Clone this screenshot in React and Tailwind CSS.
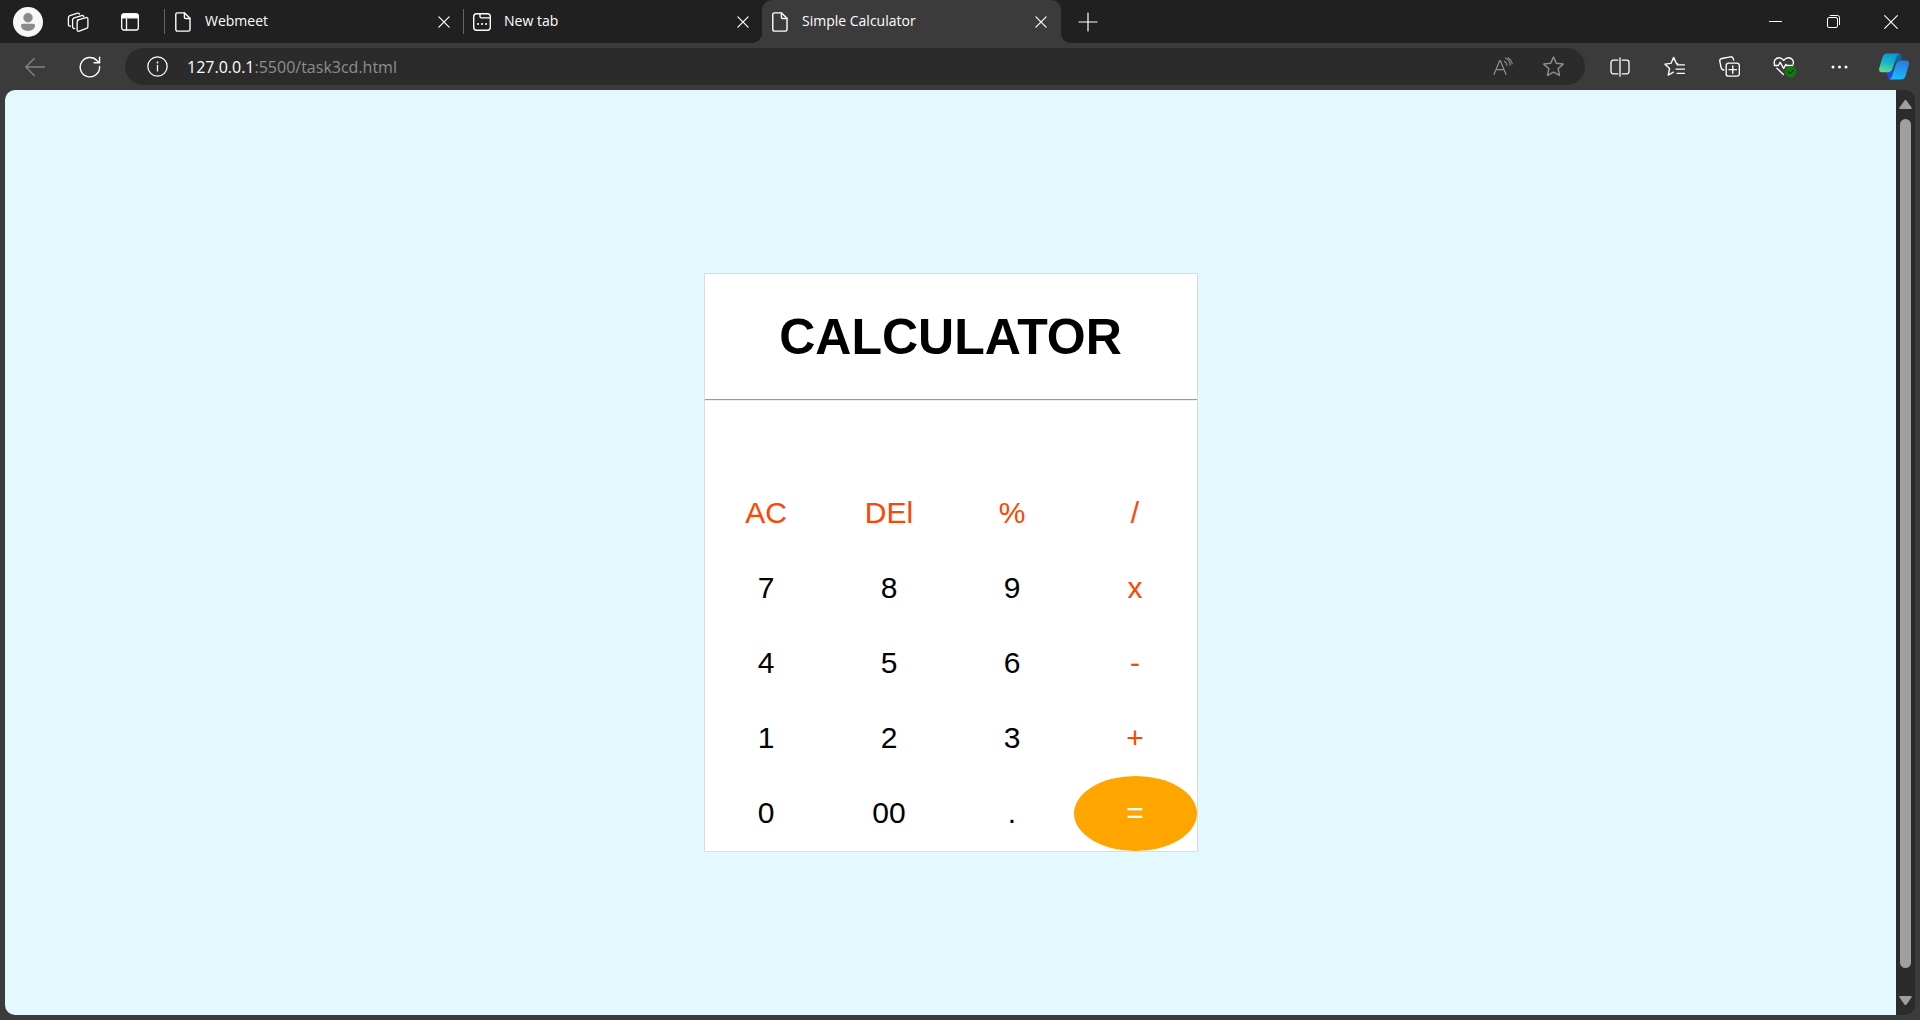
import React from "react";

function Icon({ size = 20, className = "", sw = 1.2, children }) {
  return (
    <svg
      width={size}
      height={size}
      viewBox="0 0 20 20"
      fill="none"
      stroke="currentColor"
      strokeWidth={sw}
      strokeLinecap="round"
      strokeLinejoin="round"
      className={`shrink-0 ${className}`}
      aria-hidden="true"
    >
      {children}
    </svg>
  );
}

const PageIcon = () => (
  <Icon sw={1.4}>
    <path d="M4.3 0.9H11.6L17 6.3V17.6a1.5 1.5 0 0 1-1.5 1.5H4.3a1.5 1.5 0 0 1-1.5-1.5V2.4A1.5 1.5 0 0 1 4.3 .9Z" />
    <path d="M11.4 1V5.2a1.3 1.3 0 0 0 1.3 1.3H17" />
  </Icon>
);

const NewTabIcon = () => (
  <Icon sw={1.4}>
    <rect x="1.7" y="1.7" width="16.6" height="16.6" rx="3" />
    <path d="M8 2v2.6a1.3 1.3 0 0 0 1.3 1.3H18" />
    <path d="M6 12h.1M10 12h.1M14 12h.1" strokeWidth="2" />
  </Icon>
);

const CloseIcon = () => (
  <Icon size={12} sw={2}>
    <path d="M1.5 1.5l17 17M18.5 1.5l-17 17" />
  </Icon>
);

const WorkspacesIcon = () => (
  <Icon size={22} sw={1.2}>
    <path d="M9.4 8.4l7.7-2.4a1.4 1.4 0 0 1 1.9 1.4v6.6a2 2 0 0 1-1.3 1.9l-6.6 2.5a1.4 1.4 0 0 1-1.9-1.4v-6.8a2 2 0 0 1 1.3-1.9Z" />
    <path d="M7 15.9a1.4 1.4 0 0 1-1.9-1.3V8.2a2 2 0 0 1 1.4-1.9l6.9-2.2a1.4 1.4 0 0 1 1.8 1" />
    <path d="M3.2 13.7a1.4 1.4 0 0 1-1.9-1.3V6.1a2 2 0 0 1 1.4-1.9l6.9-2.2a1.4 1.4 0 0 1 1.8.9" />
  </Icon>
);

const TabActionsIcon = () => (
  <Icon sw={1.3}>
    <rect x="1.7" y="2" width="16.6" height="16" rx="2.2" />
    <path d="M1.7 4.2A2.2 2.2 0 0 1 3.9 2h12.2a2.2 2.2 0 0 1 2.2 2.2V5.8H1.7Z" fill="currentColor" />
    <path d="M6.5 7v11" />
  </Icon>
);

const Copilot = () => (
  <svg width="30" height="27" viewBox="0 0 90 80" className="shrink-0" aria-hidden="true">
    <defs>
      <linearGradient id="cpLeft" x1="0.6" y1="0" x2="0.3" y2="1">
        <stop offset="0" stopColor="#0b96d6" />
        <stop offset="0.5" stopColor="#18b3c8" />
        <stop offset="1" stopColor="#5fe08c" />
      </linearGradient>
      <linearGradient id="cpRight" x1="0.6" y1="0" x2="0.4" y2="1">
        <stop offset="0" stopColor="#2f78e2" />
        <stop offset="1" stopColor="#17bdf7" />
      </linearGradient>
      <linearGradient id="cpTop" x1="0" y1="0" x2="1" y2="1">
        <stop offset="0" stopColor="#0a86c0" />
        <stop offset="1" stopColor="#0a4f78" />
      </linearGradient>
    </defs>
    <path fill="url(#cpTop)" d="M42 1H58C68 1 67 15 73 22H64C56 22 53 24 50 30L44 22Z" />
    <path fill="#2148dc" d="M20 57H26C33 57 36 55 39 49L46 58C42 70 41 79 35 79C26 79 26 64 20 57Z" />
    <path fill="url(#cpLeft)" d="M24 1H62C54 3 51 12 48 23L41 46C38 54 33 57 26 57H8C1 57-1 51 1 44L10 14C13 4 17 1 24 1Z" />
    <path fill="url(#cpRight)" d="M66 79H30C37 77 40 68 43 57L50 34C53 26 58 22 65 22H82C89 22 91 28 89 36L80 67C77 76 73 79 66 79Z" />
  </svg>
);

function Tab({ icon, title, active }) {
  return (
    <div
      className={
        active
          ? "relative flex w-[299px] items-center rounded-t-[10px] bg-[#3b3b3b] pl-2 pr-3.5"
          : "flex w-[299px] items-center pl-2 pr-3.5"
      }
    >
      {active && (
        <>
          <span className="absolute -left-2.5 bottom-0 size-2.5 bg-[radial-gradient(circle_at_0_0,#202020_10px,#3b3b3b_10px)]" />
          <span className="absolute -right-2.5 bottom-0 size-2.5 bg-[radial-gradient(circle_at_100%_0,#202020_10px,#3b3b3b_10px)]" />
        </>
      )}
      {icon}
      <span className="ml-3 flex-1 truncate pb-0.5 text-sm">{title}</span>
      <button type="button" aria-label={`Close ${title}`}>
        <CloseIcon />
      </button>
    </div>
  );
}

const Divider = () => <span className="h-[25px] w-px bg-[#666]" />;

function TabStrip() {
  return (
    <header className="flex h-[43px] items-stretch bg-[#202020] text-white">
      <div className="flex w-[164px] items-center pl-[13px]">
        <button type="button" aria-label="Profile">
          <svg width="30" height="30" viewBox="0 0 30 30" aria-hidden="true">
            <circle cx="15" cy="15" r="15" fill="#f7f7f7" />
            <circle cx="15" cy="10.7" r="4.7" fill="#8a8a8a" />
            <path d="M9.500 16.800h11a1.500 1.500 0 0 1 1.500 1.500C22 22 18.500 24 15 24s-7-2-7-5.700a1.500 1.500 0 0 1 1.500-1.500Z" fill="#8a8a8a" />
          </svg>
        </button>
        <button type="button" aria-label="Workspaces" className="ml-6">
          <WorkspacesIcon />
        </button>
        <button type="button" aria-label="Tab actions" className="ml-[31px]">
          <TabActionsIcon />
        </button>
      </div>
      <div className="flex items-center">
        <Divider />
      </div>
      <nav className="flex items-stretch" aria-label="Tabs">
        <Tab icon={<PageIcon />} title="Webmeet" />
        <div className="-ml-px flex items-center">
          <Divider />
        </div>
        <Tab icon={<NewTabIcon />} title="New tab" />
        <div className="-ml-px flex items-stretch">
          <Tab icon={<PageIcon />} title="Simple Calculator" active />
        </div>
      </nav>
      <button type="button" aria-label="New tab" className="ml-[17px]">
        <Icon sw={1.2}>
          <path d="M10 1v18M1 10h18" />
        </Icon>
      </button>
      <div className="ml-auto flex">
        <button type="button" aria-label="Minimize" className="flex w-[58px] items-center justify-center">
          <svg width="13" height="13" viewBox="0 0 13 13" aria-hidden="true">
            <path d="M0 6.500h13" stroke="currentColor" />
          </svg>
        </button>
        <button type="button" aria-label="Restore" className="flex w-[58px] items-center justify-center">
          <svg width="13" height="13" viewBox="0 0 13 13" fill="none" stroke="currentColor" aria-hidden="true">
            <rect x="0.5" y="2.5" width="10" height="10" rx="1.5" />
            <path d="M2.800.5H10.500a2 2 0 0 1 2 2V10" />
          </svg>
        </button>
        <button type="button" aria-label="Close window" className="flex w-[58px] items-center justify-center">
          <Icon size={14} sw={1.6}>
            <path d="M1 1l18 18M19 1L1 19" />
          </Icon>
        </button>
      </div>
    </header>
  );
}

function ToolButton({ label, children }) {
  return (
    <button type="button" aria-label={label} className="flex w-[55px] items-center justify-center">
      {children}
    </button>
  );
}

function Toolbar() {
  return (
    <div className="flex h-[47px] items-center bg-[#3b3b3b] text-white">
      <button type="button" aria-label="Back" className="ml-[25px] text-[#858585]">
        <Icon sw={1.3}>
          <path d="M19.400 10H.8M9.300 1.500L.8 10l8.500 8.500" />
        </Icon>
      </button>
      <button type="button" aria-label="Refresh" className="ml-[34px]">
        <Icon size={22} sw={1.3}>
          <path d="M18.700 9.500A8.800 8.800 0 1 1 16.500 4.300l2 1.600" />
          <path d="M18.700 1.200v4.900h-5" />
        </Icon>
      </button>
      <div className="ml-6 flex h-[37px] flex-1 items-center rounded-full bg-[#2b2b2b] pl-[22px] pr-[21px]">
        <button type="button" aria-label="Site information">
          <Icon size={21} sw={1.2}>
            <circle cx="10" cy="10" r="9.2" />
            <path d="M10 9v5.200" />
            <path d="M10 6.100v.1" strokeWidth="1.8" />
          </Icon>
        </button>
        <label htmlFor="address" className="ml-[19px] text-base">
          127.0.0.1
        </label>
        <input
          id="address"
          type="text"
          defaultValue=":5500/task3cd.html"
          className="min-w-0 flex-1 bg-transparent text-base text-[#8e8e8e] outline-none"
        />
        <button type="button" aria-label="Read aloud" className="text-[#8e8e8e]">
          <Icon sw={1.2}>
            <path d="M1 17.500L6.800 3.500h.5L13 17.500M3 12.700h8" />
            <path d="M11.500 4.200c1.400.8 2.200 2.200 2.300 4M12.300 1c3 1.200 4.700 3.800 4.900 7.200M15 .8c2.300 1.500 3.700 3.400 4.300 6" strokeWidth="1.1" />
          </Icon>
        </button>
        <button type="button" aria-label="Add to favorites" className="ml-[30px] text-[#8e8e8e]">
          <Icon size={21} sw={1.4}>
            <path d="M10 1l2.700 5.900 6.500.8-4.800 4.400 1.300 6.400L10 15.300l-5.700 3.200 1.300-6.400L.8 7.700l6.500-.8Z" />
          </Icon>
        </button>
      </div>
      <div className="ml-[7px] flex self-stretch">
        <ToolButton label="Split screen">
          <Icon size={20} sw={1.3}>
            <path d="M7.800 3.200H3.200A2.200 2.200 0 0 0 1 5.400v9.200a2.200 2.200 0 0 0 2.200 2.200h4.600M12.200 3.200h4.600A2.200 2.200 0 0 1 19 5.400v9.200a2.200 2.200 0 0 1-2.200 2.200h-4.600M10 .8v18.400" />
          </Icon>
        </ToolButton>
        <ToolButton label="Favorites">
          <Icon size={21} sw={1.3}>
            <path d="M13 7.300l-1.200-.2L9.200 1.300 6.700 7 .8 7.700l4.500 4.200L4 18.200l5-2.800M12.500 8.500h6.900M11.500 12.500h7.900M12.500 16.500h6.900" />
          </Icon>
        </ToolButton>
        <ToolButton label="Collections">
          <Icon size={21} sw={1.3}>
            <rect x="6.8" y="6.8" width="12.6" height="12.4" rx="2.4" />
            <path d="M13.100 9.500v7M9.600 13h7M4.600 13.300C3 13.300 2.400 12.400 2 11L.8 5.200C.5 3.800 1.300 2.700 2.600 2.400l8.200-1.600c1.400-.3 2.500.5 2.900 2l.2 1" />
          </Icon>
        </ToolButton>
        <ToolButton label="Browser essentials">
          <svg width="24" height="22" viewBox="0 0 24 22" fill="none" stroke="currentColor" strokeWidth="1.4" strokeLinecap="round" strokeLinejoin="round" aria-hidden="true">
            <path d="M1.500 8.300C.4 4.500 2.900 1.800 6 1.800c2 0 3.300 1 4.700 2.600 1.400-1.600 2.800-2.600 4.800-2.600 3.300 0 5.600 2.800 4.700 6.200" />
            <path d="M1.300 9.500h4l1.900-3.200 3.500 6.200 2.100-4.200.9 1.200h6M3.900 12.200l6.500 6.200" />
            <circle cx="17.7" cy="15.7" r="5.7" fill="#107c10" stroke="none" />
            <path d="M15.200 15.900l1.800 1.700 3.200-3.400" stroke="#063f06" strokeWidth="1.3" />
          </svg>
        </ToolButton>
        <ToolButton label="Settings and more">
          <svg width="17" height="4" viewBox="0 0 17 4" fill="currentColor" aria-hidden="true">
            <circle cx="2" cy="2" r="1.5" />
            <circle cx="8.5" cy="2" r="1.5" />
            <circle cx="15" cy="2" r="1.5" />
          </svg>
        </ToolButton>
        <button type="button" aria-label="Copilot" className="flex w-[53px] items-center justify-center">
          <Copilot />
        </button>
      </div>
    </div>
  );
}

const KEYS = [
  "AC", "DEl", "%", "/",
  "7", "8", "9", "x",
  "4", "5", "6", "-",
  "1", "2", "3", "+",
  "0", "00", ".", "=",
];
const OPERATORS = ["AC", "DEl", "%", "/", "x", "-", "+"];

function keyClass(key) {
  if (key === "=") return "rounded-[50%] bg-[#ffa500] text-white";
  return OPERATORS.includes(key) ? "text-[#ff4500]" : "text-black";
}

function Calculator() {
  return (
    <section className="w-[494px] border border-[#dcdcdc] bg-white font-['Liberation_Sans',Arial,sans-serif]">
      <h1 className="pb-[31px] pt-[33px] text-center text-[50px] font-bold leading-[61px]">CALCULATOR</h1>
      <hr className="border-b border-t border-b-[#eeeeee] border-t-[#9a9a9a]" />
      <input
        type="text"
        aria-label="Result"
        readOnly
        className="block h-[75px] w-full px-5 text-right text-3xl outline-none"
      />
      <div className="grid grid-cols-4">
        {KEYS.map((key) => (
          <button key={key} type="button" className={`h-[75px] pb-0.5 text-3xl ${keyClass(key)}`}>
            {key}
          </button>
        ))}
      </div>
    </section>
  );
}

function Scrollbar() {
  return (
    <div className="flex w-[19px] flex-col items-center rounded-r-[10px] bg-[#2b2b2b] py-[9px]" aria-hidden="true">
      <svg width="13" height="11" viewBox="0 0 13 11" fill="#9f9f9f">
        <path d="M5.500 1.500a1.200 1.200 0 0 1 2 0l5 7c.5.8 0 1.500-.8 1.500H1.300C.5 10 0 9.300.5 8.500Z" />
      </svg>
      <span className="mb-[27px] mt-[9px] w-[11px] flex-1 rounded-full bg-[#9f9f9f]" />
      <svg width="13" height="11" viewBox="0 0 13 11" fill="#9f9f9f">
        <path d="M5.500 9.500a1.200 1.200 0 0 0 2 0l5-7C13 1.700 12.500 1 11.700 1H1.300C.5 1 0 1.700.5 2.500Z" />
      </svg>
    </div>
  );
}

export default function App() {
  return (
    <div className="flex min-h-screen flex-col bg-[#3b3b3b] font-['Open_Sans','Segoe_UI',sans-serif]">
      <TabStrip />
      <Toolbar />
      <div className="mx-[5px] mb-[5px] flex flex-1">
        <main className="flex flex-1 items-center justify-center rounded-l-[10px] bg-[#e3f8ff] pt-5">
          <Calculator />
        </main>
        <Scrollbar />
      </div>
    </div>
  );
}
